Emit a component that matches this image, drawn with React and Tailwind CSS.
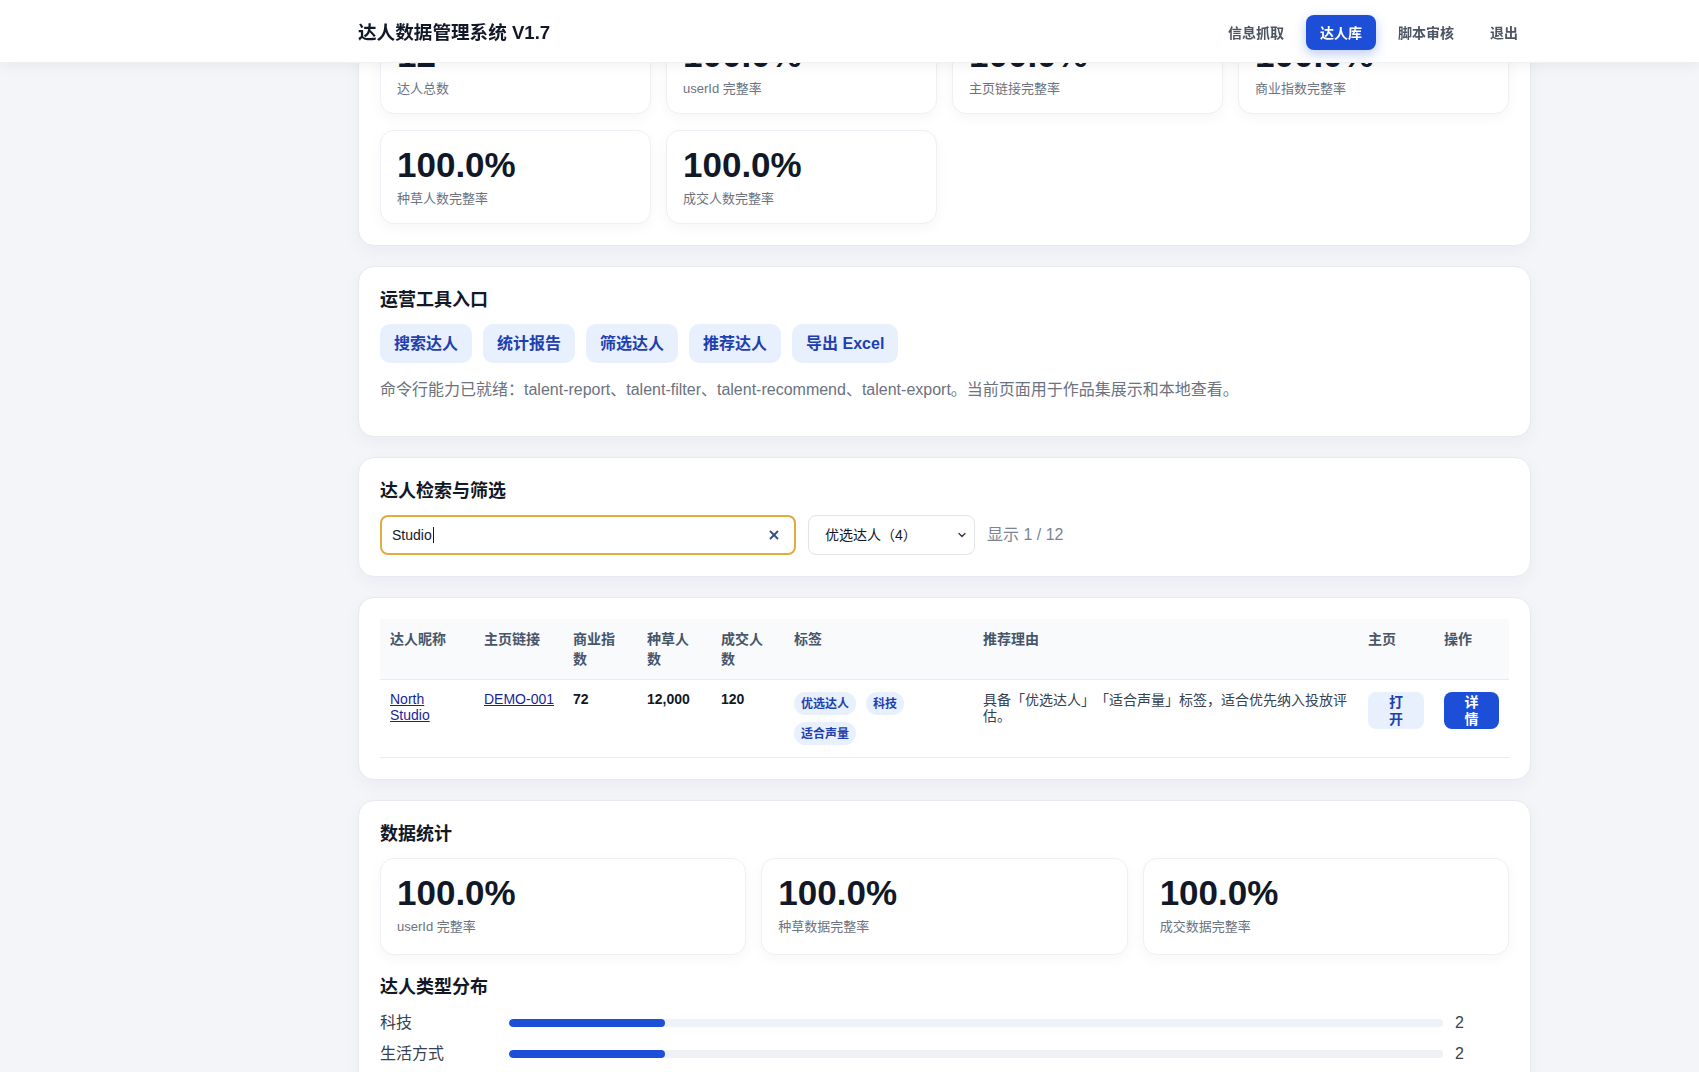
import React, { useLayoutEffect, useRef } from "react";
import { X, ChevronDown } from "lucide-react";

function Stat({ value, label, tall = false }) {
  return (
    <div className={"rounded-[14px] border border-[#edf0f4] bg-white px-4 pt-4 shadow-[0_4px_14px_rgba(15,23,42,0.04)] " + (tall ? "pb-[17px]" : "pb-3.5")}>
      <div className="text-[35px] font-bold leading-none text-[#111827]">{value}</div>
      <div className="mt-[7px] text-[13px] leading-5 text-[#6b7280]">{label}</div>
    </div>
  );
}

function Section({ children, className = "" }) {
  return (
    <section className={"rounded-2xl border border-[#e6e9ef] bg-white p-[21px] shadow-[0_6px_18px_rgba(15,23,42,0.04)] " + className}>
      {children}
    </section>
  );
}

function Title({ children }) {
  return <h2 className="mb-3 text-lg font-bold leading-6 text-[#111827]">{children}</h2>;
}

function Tag({ children }) {
  return (
    <span className="inline-flex h-[23px] items-center rounded-full bg-[#e8f0fe] px-[7px] text-xs font-bold text-[#1e40af]">
      {children}
    </span>
  );
}

const dist = [
  ["科技", 2],
  ["生活方式", 2],
  ["美妆", 2],
  ["美食", 2],
  ["旅行", 2],
  ["游戏", 2],
];

export default function App() {
  const scrollRef = useRef(null);
  const gridRef = useRef(null);

  useLayoutEffect(() => {
    const c = scrollRef.current;
    const g = gridRef.current;
    if (!c || !g) return;
    const off = g.getBoundingClientRect().top - c.getBoundingClientRect().top + c.scrollTop;
    c.scrollTop = off - 20;
  }, []);

  return (
    <div className="h-screen w-full overflow-hidden bg-[#f3f5f9] font-[family-name:Liberation_Sans,Noto_Sans_CJK_SC,sans-serif] text-[#111827] [text-spacing-trim:space-all]">
      <div ref={scrollRef} className="h-full w-full overflow-hidden">
        <header className="sticky top-0 z-20 h-[63px] w-full border-b border-[#eef0f4] bg-white shadow-[0_2px_14px_rgba(15,23,42,0.06)]">
          <div className="ml-[358px] flex h-full w-[1174px] items-center justify-between pt-[3px]">
            <div className="text-[18.6px] font-bold text-[#111827]">达人数据管理系统 V1.7</div>
            <nav className="flex items-center gap-2">
              <a className="flex h-[35px] items-center rounded-lg px-3.5 text-sm font-bold text-[#4b5563]">信息抓取</a>
              <a className="flex h-[35px] items-center rounded-lg bg-[#1d4ed8] px-3.5 text-sm font-bold text-white shadow-[0_4px_12px_rgba(29,78,216,0.3)]">达人库</a>
              <a className="flex h-[35px] items-center rounded-lg px-3.5 text-sm font-bold text-[#4b5563]">脚本审核</a>
              <a className="flex h-[35px] items-center rounded-lg px-3.5 text-sm font-bold text-[#4b5563]">退出</a>
            </nav>
          </div>
        </header>

        <main className="ml-[358px] flex w-[1173px] flex-col gap-5 pt-6 pb-10">
          <Section>
            <Title>数据概览</Title>
            <div ref={gridRef} className="grid grid-cols-4 gap-x-[15px] gap-y-4">
              <Stat value="12" label="达人总数" />
              <Stat value="100.0%" label="userId 完整率" />
              <Stat value="100.0%" label="主页链接完整率" />
              <Stat value="100.0%" label="商业指数完整率" />
              <Stat value="100.0%" label="种草人数完整率" />
              <Stat value="100.0%" label="成交人数完整率" />
            </div>
          </Section>

          <Section>
            <Title>运营工具入口</Title>
            <div className="flex gap-[11px]">
              {["搜索达人", "统计报告", "筛选达人", "推荐达人", "导出 Excel"].map((t) => (
                <button key={t} className="h-[39px] rounded-[10px] bg-[#e8f0fe] px-3.5 text-base font-bold text-[#1e40af]">
                  {t}
                </button>
              ))}
            </div>
            <p className="mt-[15px] mb-[13px] text-base leading-6 text-[#6b7280]">
              命令行能力已就绪：talent-report、talent-filter、talent-recommend、talent-export。当前页面用于作品集展示和本地查看。
            </p>
          </Section>

          <Section>
            <Title>达人检索与筛选</Title>
            <div className="flex items-center gap-3">
              <div className="flex h-[40px] w-[416px] items-center rounded-lg border-2 border-[#e2aa3f] bg-white pl-2.5 pr-[13px]">
                <span className="text-sm text-[#111827]">Studio</span>
                <span className="ml-[1px] h-4 w-px bg-[#111827]"></span>
                <span className="flex-1"></span>
                <X size={14} strokeWidth={3.2} className="text-[#35517d]" />
              </div>
              <div className="flex h-[40px] w-[167px] items-center justify-between rounded-lg border border-[#dfe3ea] bg-white pl-4 pr-1.5 text-sm text-[#111827]">
                <span>优选达人（4）</span>
                <ChevronDown size={12} strokeWidth={2.6} className="text-[#333]" />
              </div>
              <span className="text-base text-[#7b8494]">显示 1 / 12</span>
            </div>
          </Section>

          <Section>
            <table className="w-full table-fixed border-collapse">
              <colgroup>
                <col className="w-[94px]" />
                <col className="w-[89px]" />
                <col className="w-[74px]" />
                <col className="w-[74px]" />
                <col className="w-[73px]" />
                <col className="w-[189px]" />
                <col className="w-[385px]" />
                <col className="w-[76px]" />
                <col className="w-[75px]" />
              </colgroup>
              <thead>
                <tr className="border-b border-[#e7eaf0] bg-[#f8fafc]">
                  {["达人昵称", "主页链接", "商业指数", "种草人数", "成交人数", "标签", "推荐理由", "主页", "操作"].map((h) => (
                    <th key={h} className="px-2.5 py-2.5 text-left align-top text-sm font-bold leading-5 text-[#475569]">
                      {h}
                    </th>
                  ))}
                </tr>
              </thead>
              <tbody>
                <tr className="border-b border-[#e7eaf0]">
                  <td className="px-2.5 pt-[11px] pb-3 align-top text-sm leading-4">
                    <a className="text-[#1a1f9c] underline">North Studio</a>
                  </td>
                  <td className="px-2.5 pt-[11px] pb-3 align-top text-sm leading-4">
                    <a className="whitespace-nowrap text-[#1a1f9c] underline">DEMO-001</a>
                  </td>
                  <td className="px-2.5 pt-[11px] pb-3 align-top text-sm font-bold leading-4 text-[#111827]">72</td>
                  <td className="px-2.5 pt-[11px] pb-3 align-top text-sm font-bold leading-4 text-[#111827]">12,000</td>
                  <td className="px-2.5 pt-[11px] pb-3 align-top text-sm font-bold leading-4 text-[#111827]">120</td>
                  <td className="px-2.5 pt-3 pb-3 align-top">
                    <div className="flex flex-wrap gap-x-2.5 gap-y-[7px]">
                      <Tag>优选达人</Tag>
                      <Tag>科技</Tag>
                      <Tag>适合声量</Tag>
                    </div>
                  </td>
                  <td className="px-2.5 pt-3 pb-3 align-top text-sm leading-4 text-[#374151]">
                    具备「优选达人」「适合声量」标签，适合优先纳入投放评估。
                  </td>
                  <td className="px-2.5 pt-3 pb-3 align-top">
                    <button className="w-full rounded-lg bg-[#e8f0fe] px-4 py-[2px] text-center text-sm font-bold leading-[16.5px] text-[#1e40af]">
                      打开
                    </button>
                  </td>
                  <td className="px-2.5 pt-3 pb-3 align-top">
                    <button className="w-full rounded-lg bg-[#1d4ed8] px-4 py-[2px] text-center text-sm font-bold leading-[16.5px] text-white">
                      详情
                    </button>
                  </td>
                </tr>
              </tbody>
            </table>
          </Section>

          <Section>
            <Title>数据统计</Title>
            <div className="grid grid-cols-3 gap-[15px]">
              <Stat tall value="100.0%" label="userId 完整率" />
              <Stat tall value="100.0%" label="种草数据完整率" />
              <Stat tall value="100.0%" label="成交数据完整率" />
            </div>
            <h3 className="mt-5 mb-3 text-lg font-bold leading-6 text-[#111827]">达人类型分布</h3>
            <div className="flex flex-col gap-[7px]">
              {dist.map(([name, n]) => (
                <div key={name} className="flex h-6 items-center gap-3">
                  <span className="w-[117px] text-base text-[#374151]">{name}</span>
                  <div className="h-2 flex-1 overflow-hidden rounded-full bg-[#eef1f5]">
                    <div className="h-full rounded-full bg-[#1d4ed8]" style={{ width: `${(n / 12) * 100}%` }}></div>
                  </div>
                  <span className="w-[54px] text-base text-[#374151]">{n}</span>
                </div>
              ))}
            </div>
          </Section>
        </main>
      </div>
    </div>
  );
}
